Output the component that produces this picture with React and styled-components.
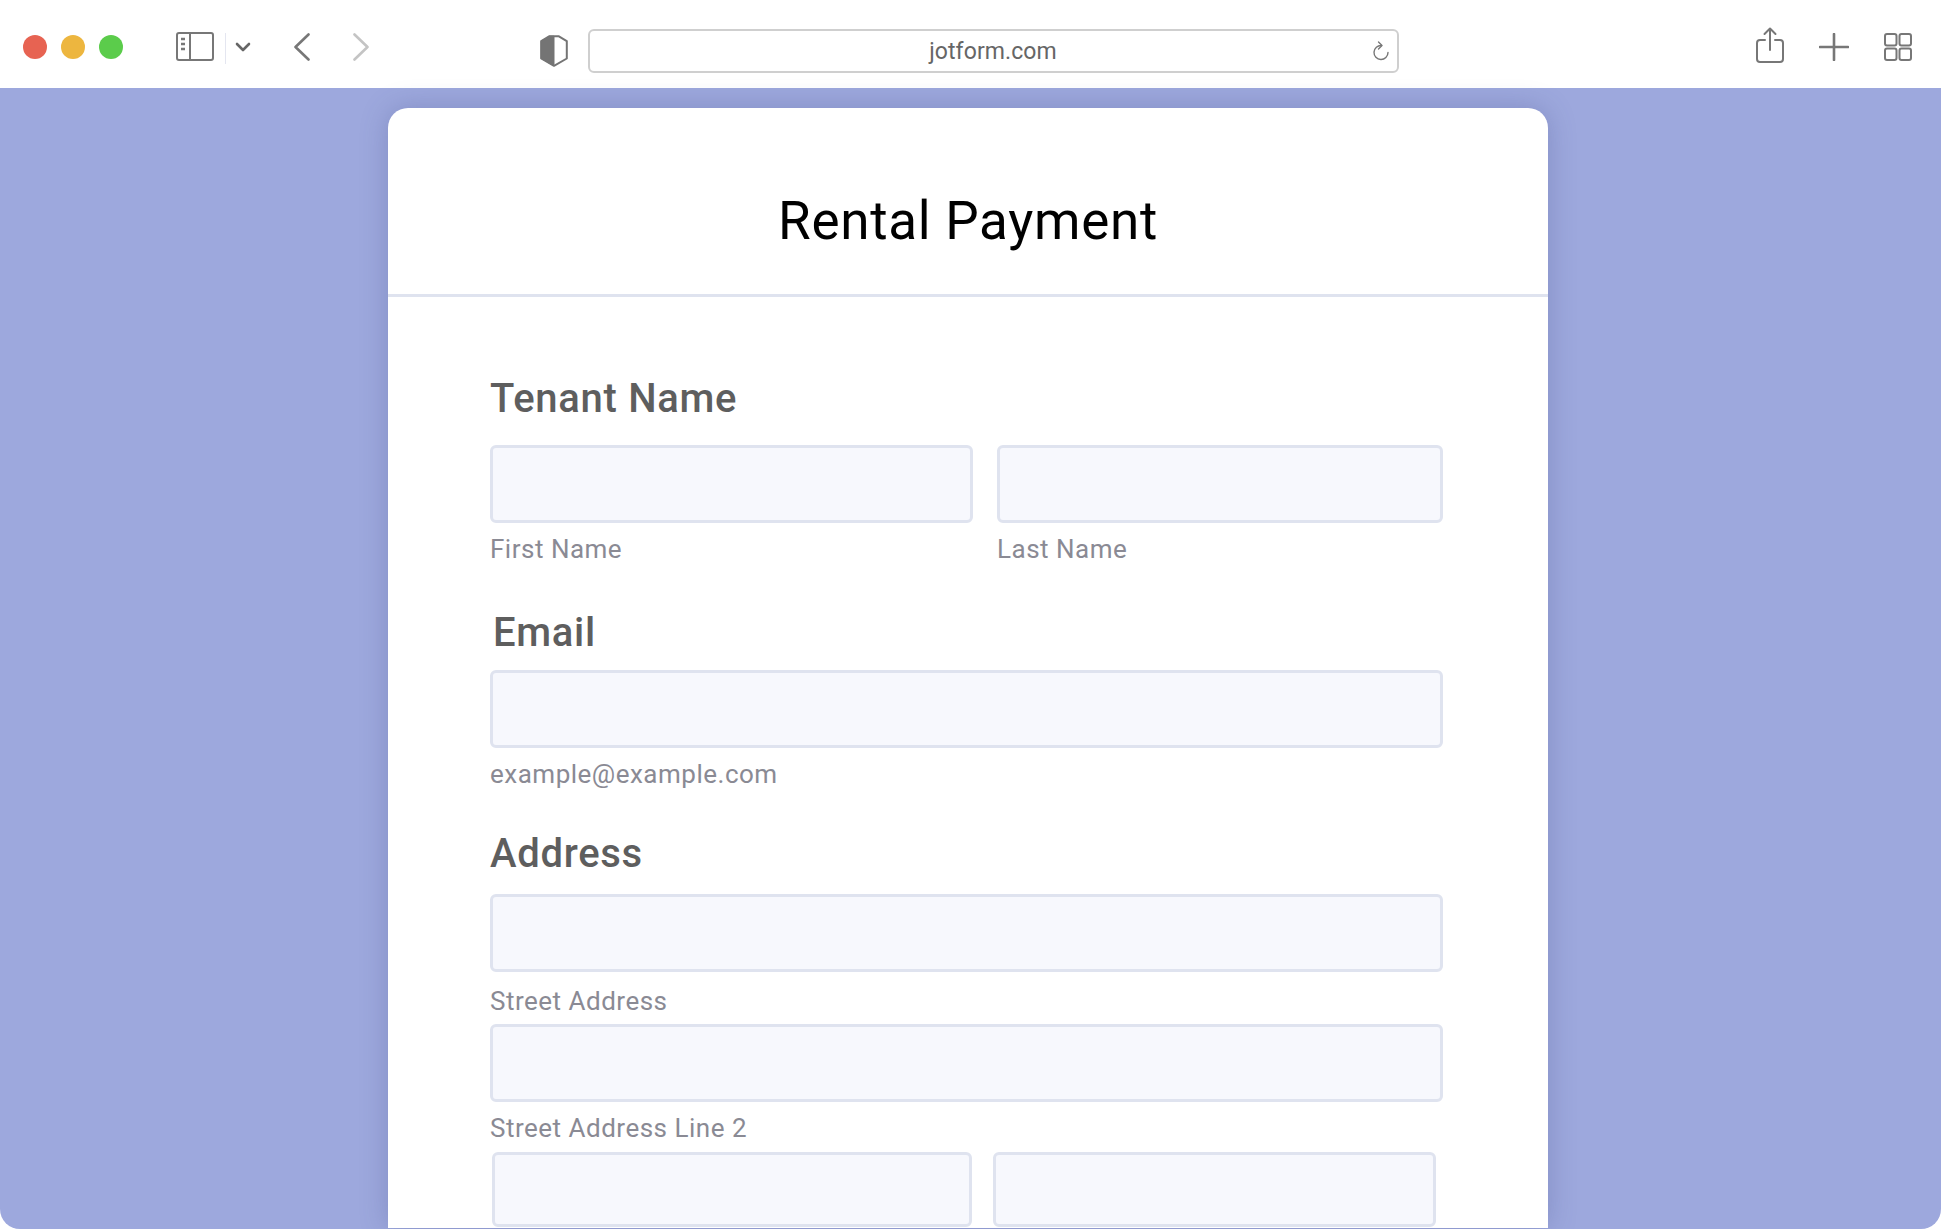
import styled, { createGlobalStyle } from "styled-components";

const Global = createGlobalStyle`
  html, body {
    margin: 0;
    padding: 0;
    background: #fff;
  }
  * { box-sizing: border-box; }
`;

const Window = styled.div`
  width: 1941px;
  height: 1229px;
  display: flex;
  flex-direction: column;
  overflow: hidden;
  border-radius: 0 0 20px 20px;
  font-family: "Roboto", "Liberation Sans", sans-serif;
`;

const Toolbar = styled.header`
  height: 88px;
  flex: none;
  display: flex;
  align-items: center;
  padding: 6px 29px 0 23px;
  background: #fff;
`;

const Lights = styled.div`
  display: flex;
  gap: 14px;
`;

const Light = styled.span`
  width: 24px;
  height: 24px;
  border-radius: 50%;
  background: ${(p) => p.color};
`;

const Tool = styled.span`
  display: flex;
  flex: none;
  margin-left: ${(p) => p.left || 0}px;
  margin-top: ${(p) => p.top || 0}px;
`;

const Divider = styled.span`
  width: 1px;
  height: 31px;
  margin: 3px 0 0 11px;
  background: #e4e6f0;
`;

const UrlBar = styled.div`
  flex: none;
  width: 811px;
  height: 44px;
  margin: 8px 0 0 20px;
  padding: 0 7px 0 0;
  display: flex;
  align-items: center;
  position: relative;
  justify-content: flex-end;
  border: 2px solid #cfcfcf;
  border-radius: 6px;
`;

const UrlText = styled.span`
  position: absolute;
  left: 0;
  right: 1px;
  top: 7px;
  text-align: center;
  font-size: 23px;
  letter-spacing: 0.1px;
  color: #666;
`;

const Spacer = styled.div`
  flex: 1;
`;

const Stage = styled.main`
  flex: 1;
  min-height: 0;
  padding: 20px 0 0 388px;
  background: #9da8dd;
`;

const Card = styled.section`
  width: 1160px;
  height: 1120px;
  background: #fff;
  border-radius: 20px 20px 0 0;
  box-shadow: 0 0 28px rgba(62, 72, 130, 0.28);
`;

const CardHeader = styled.div`
  height: 189px;
  display: flex;
  align-items: center;
  justify-content: center;
  padding-top: 40px;
  border-bottom: 3px solid #dfe3ef;
`;

const Title = styled.h1`
  margin: 0;
  font-size: 53px;
  font-weight: 400;
  letter-spacing: 0.7px;
  color: #000;
`;

const Form = styled.form`
  padding: 0 105px 0 102px;
`;

const Heading = styled.h2`
  margin: ${(p) => p.top}px 0 ${(p) => p.bottom}px ${(p) => p.left || 0}px;
  height: 46px;
  line-height: 46px;
  font-size: 40px;
  font-weight: 500;
  letter-spacing: 0.7px;
  color: #5e5e5e;
`;

const Row = styled.div`
  display: flex;
  gap: ${(p) => p.gap || 24}px;
  padding-left: ${(p) => p.inset || 0}px;
`;

const Field = styled.div`
  flex: ${(p) => (p.width ? "none" : 1)};
  width: ${(p) => (p.width ? `${p.width}px` : "auto")};
`;

const Input = styled.div`
  height: ${(p) => p.height || 78}px;
  background: #f7f8fd;
  border: 3px solid #dfe3ef;
  border-radius: 6px;
`;

const Hint = styled.div`
  height: ${(p) => p.height || 40}px;
  padding-top: ${(p) => p.top || 6}px;
  line-height: 40px;
  font-size: 26px;
  letter-spacing: 0.5px;
  color: #8a8a94;
`;

const Sidebar = () => (
  <svg width="38" height="29" viewBox="0 0 38 29" fill="none" stroke="#777" strokeWidth="2">
    <rect x="1" y="1" width="36" height="27" rx="2" />
    <path d="M14 1v27" />
    <path d="M5 7h4M5 12h4M5 17h4" strokeWidth="2.4" />
  </svg>
);

const Chevron = () => (
  <svg width="16" height="10" viewBox="0 0 16 10" fill="none" stroke="#666" strokeWidth="2.6" strokeLinecap="round" strokeLinejoin="round">
    <path d="M2 2l6 6 6-6" />
  </svg>
);

const Back = ({ color }) => (
  <svg width="16" height="28" viewBox="0 0 16 28" fill="none" stroke={color} strokeWidth="2.6" strokeLinecap="round" strokeLinejoin="round">
    <path d="M14.5 1.5L1.5 14l13 12.5" />
  </svg>
);

const Forward = ({ color }) => (
  <svg width="16" height="28" viewBox="0 0 16 28" fill="none" stroke={color} strokeWidth="2.6" strokeLinecap="round" strokeLinejoin="round">
    <path d="M1.5 1.5L14.5 14 1.5 26.5" />
  </svg>
);

const Shield = () => (
  <svg width="28" height="32" viewBox="0 0 28 32">
    <path d="M14 1.2H18.5L26.8 6.2V23.5L14 30.8L1.2 23.5V6.2L9.5 1.2z" fill="#fff" stroke="#747474" strokeWidth="2" strokeLinejoin="round" />
    <path d="M14 1.2H9.5L1.2 6.2V23.5L14 30.8z" fill="#747474" stroke="#747474" strokeLinejoin="round" />
  </svg>
);

const Reload = () => (
  <svg width="18" height="20" viewBox="0 0 18 20" fill="none" stroke="#777" strokeWidth="1.4" strokeLinecap="round" strokeLinejoin="round">
    <path d="M9.5 4.5A7 7 0 1 0 16 11.5" />
    <path d="M6.5 1L10 4.5 6.5 8" />
  </svg>
);

const Share = () => (
  <svg width="28" height="36" viewBox="0 0 28 36" fill="none" stroke="#777" strokeWidth="2" strokeLinecap="round" strokeLinejoin="round">
    <path d="M14 1.5V23M8.5 7l5.5-5.5L19.5 7" />
    <path d="M9 13H4a3 3 0 0 0-3 3v16a3 3 0 0 0 3 3h20a3 3 0 0 0 3-3V16a3 3 0 0 0-3-3h-5" />
  </svg>
);

const Plus = () => (
  <svg width="30" height="28" viewBox="0 0 30 28" fill="none" stroke="#777" strokeWidth="2.6" strokeLinecap="round">
    <path d="M15 1v26M1 14h28" />
  </svg>
);

const Tabs = () => (
  <svg width="28" height="28" viewBox="0 0 28 28" fill="none" stroke="#777" strokeWidth="2">
    <rect x="1" y="1" width="11.5" height="11.5" rx="2" />
    <rect x="15.5" y="1" width="11.5" height="11.5" rx="2" />
    <rect x="1" y="15.5" width="11.5" height="11.5" rx="2" />
    <rect x="15.5" y="15.5" width="11.5" height="11.5" rx="2" />
  </svg>
);

export default function App() {
  return (
    <>
      <Global />
      <Window>
        <Toolbar>
          <Lights>
            <Light color="#e76352" />
            <Light color="#edb63f" />
            <Light color="#5bcc4b" />
          </Lights>
          <Tool left={53} top={-1}><Sidebar /></Tool>
          <Divider />
          <Tool left={9}><Chevron /></Tool>
          <Tool left={43}><Back color="#777" /></Tool>
          <Tool left={43}><Forward color="#c4c4c4" /></Tool>
          <Tool left={171} top={8}><Shield /></Tool>
          <UrlBar>
            <UrlText>jotform.com</UrlText>
            <Reload />
          </UrlBar>
          <Spacer />
          <Tool top={-4}><Share /></Tool>
          <Tool left={35}><Plus /></Tool>
          <Tool left={35}><Tabs /></Tool>
        </Toolbar>
        <Stage>
          <Card>
            <CardHeader>
              <Title>Rental Payment</Title>
            </CardHeader>
            <Form>
              <Heading top={79} bottom={23}>Tenant Name</Heading>
              <Row>
                <Field width={483}>
                  <Input />
                  <Hint>First Name</Hint>
                </Field>
                <Field>
                  <Input />
                  <Hint>Last Name</Hint>
                </Field>
              </Row>
              <Heading top={47} bottom={14} left={3}>Email</Heading>
              <Input />
              <Hint>example@example.com</Hint>
              <Heading top={43} bottom={17}>Address</Heading>
              <Input />
              <Hint height={52} top={9}>Street Address</Hint>
              <Input />
              <Hint height={50}>Street Address Line 2</Hint>
              <Row gap={21} inset={2}>
                <Field width={480}>
                  <Input height={75} />
                </Field>
                <Field width={443}>
                  <Input height={75} />
                </Field>
              </Row>
            </Form>
          </Card>
        </Stage>
      </Window>
    </>
  );
}
